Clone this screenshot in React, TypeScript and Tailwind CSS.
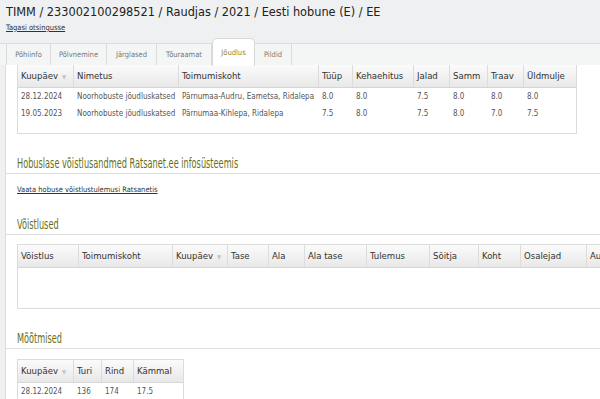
const cond = "font-['DejaVu_Sans_Condensed','DejaVu_Sans',sans-serif]";

const tabs = [
  { label: "Põhiinfo", w: "w-[45px]" },
  { label: "Põlvnemine", w: "w-[56px]" },
  { label: "Järglased", w: "w-[50px]" },
  { label: "Tõuraamat", w: "w-[55px]" },
  { label: "Jõudlus", w: "w-[43px]", active: true },
  { label: "Pildid", w: "w-[37px]" },
];

type Col = { label: string; w: string; sort?: boolean };

const perfCols: Col[] = [
  { label: "Kuupäev", w: "w-[56px]", sort: true },
  { label: "Nimetus", w: "w-[105px]" },
  { label: "Toimumiskoht", w: "w-[140px]" },
  { label: "Tüüp", w: "w-[34px]" },
  { label: "Kehaehitus", w: "w-[61px]" },
  { label: "Jalad", w: "w-[36px]" },
  { label: "Samm", w: "w-[38px]" },
  { label: "Traav", w: "w-[36px]" },
  { label: "Üldmulje", w: "w-[53px]" },
];

const perfRows = [
  ["28.12.2024", "Noorhobuste jõudluskatsed", "Pärnumaa-Audru, Eametsa, Ridalepa", "8.0", "8.0", "7.5", "8.0", "8.0", "8.0"],
  ["19.05.2023", "Noorhobuste jõudluskatsed", "Pärnumaa-Kihlepa, Ridalepa", "7.5", "8.0", "7.5", "8.0", "7.0", "7.5"],
];

const compCols: Col[] = [
  { label: "Võistlus", w: "w-[61px]" },
  { label: "Toimumiskoht", w: "w-[94px]" },
  { label: "Kuupäev", w: "w-[55px]", sort: true },
  { label: "Tase", w: "w-[41px]" },
  { label: "Ala", w: "w-[36px]" },
  { label: "Ala tase", w: "w-[62px]" },
  { label: "Tulemus", w: "w-[63px]" },
  { label: "Sõitja", w: "w-[49px]" },
  { label: "Koht", w: "w-[42px]" },
  { label: "Osalejad", w: "w-[66px]" },
  { label: "Auhind", w: "w-[60px]" },
];

const measCols: Col[] = [
  { label: "Kuupäev", w: "w-[56px]", sort: true },
  { label: "Turi", w: "w-[28px]" },
  { label: "Rind", w: "w-[32px]" },
  { label: "Kämmal", w: "w-[49px]" },
];

function HeadRow({ cols }: { cols: Col[] }) {
  return (
    <div className="flex h-[23px] bg-gradient-to-b from-[#fbfbfb] to-[#e8e8e8] border-b border-[#d6d6d6]">
      {cols.map((c, i) => (
        <div
          key={i}
          className={`${c.w} shrink-0 flex items-center px-[3px] border-r border-[#dcdcdc] last:border-r-0 text-[9.5px] text-[#333] whitespace-nowrap overflow-hidden ${cond}`}
        >
          {c.label}
          {c.sort && <span className="ml-[4px] text-[6px] text-[#c4c4c4]">▼</span>}
        </div>
      ))}
    </div>
  );
}

function BodyRow({ cols, cells }: { cols: Col[]; cells: string[] }) {
  return (
    <div className="flex h-[17px]">
      {cells.map((v, i) => (
        <div
          key={i}
          className={`${cols[i].w} shrink-0 flex items-center px-[3px] text-[8px] text-[#555] whitespace-nowrap overflow-hidden ${cond}`}
        >
          {v}
        </div>
      ))}
    </div>
  );
}

function Heading({ children, h }: { children: string; h: string }) {
  return (
    <div className={`${h} border-b border-[#dedede] flex items-end pb-[3px] pl-[11px]`}>
      <span className="inline-block origin-left scale-x-[0.65] whitespace-nowrap text-[14px] leading-[14px] text-[#66701a]">
        {children}
      </span>
    </div>
  );
}

export default function App() {
  return (
    <div className={`w-[600px] h-[399px] overflow-hidden bg-[#eef0f1] ${cond}`}>
      <div className="h-[37px] pl-[6px] pt-[4px]">
        <h1 className="text-[12.6px] leading-[16px] text-[#222] font-normal">
          TIMM / 233002100298521 / Raudjas / 2021 / Eesti hobune (E) / EE
        </h1>
        <a className="block mt-[2px] text-[7.5px] text-[#333] underline">Tagasi otsingusse</a>
      </div>

      <div className="h-[28px] flex items-end">
        <div className="flex-1 h-[22px] flex bg-[#f4f5f5] border-t border-[#d9dcdc] pl-[6px]">
          {tabs.map((t, i) => (
            <div
              key={i}
              className={
                t.active
                  ? `${t.w} shrink-0 h-[28px] -mt-[6px] bg-white border border-b-0 border-[#d8d8d8] rounded-t-[5px] flex items-center justify-center text-[7.5px] text-[#8a8a32]`
                  : `${t.w} shrink-0 h-full border-r border-[#dcdcdc] first:border-l flex items-center justify-center text-[7.5px] text-[#777]`
              }
            >
              {t.label}
            </div>
          ))}
        </div>
      </div>

      <div className="ml-[5px] border-l border-[#d8dcdc] bg-white h-[340px]">
        <div className="pl-[11px]">
          <div className="w-[560px] h-[69px] border border-t-0 border-[#dcdcdc]">
            <HeadRow cols={perfCols} />
            {perfRows.map((r, i) => (
              <BodyRow key={i} cols={perfCols} cells={r} />
            ))}
          </div>
        </div>

        <Heading h="h-[40px]">Hobuslase võistlusandmed Ratsanet.ee infosüsteemis</Heading>
        <div className="h-[25px] pl-[11px] pt-[11px]">
          <a className="block text-[7.5px] leading-[10px] text-[#333] underline">
            Vaata hobuse võistlustulemusi Ratsanetis
          </a>
        </div>

        <Heading h="h-[36px]">Võistlused</Heading>
        <div className="pl-[11px] pt-[9px]">
          <div className="w-[620px] h-[65px] border border-[#dcdcdc]">
            <HeadRow cols={compCols} />
          </div>
        </div>

        <Heading h="h-[40px]">Mõõtmised</Heading>
        <div className="pl-[11px] pt-[10px]">
          <div className="w-[167px] h-[50px] border border-b-0 border-[#dcdcdc]">
            <HeadRow cols={measCols} />
            <BodyRow cols={measCols} cells={["28.12.2024", "136", "174", "17.5"]} />
          </div>
        </div>
      </div>
    </div>
  );
}
